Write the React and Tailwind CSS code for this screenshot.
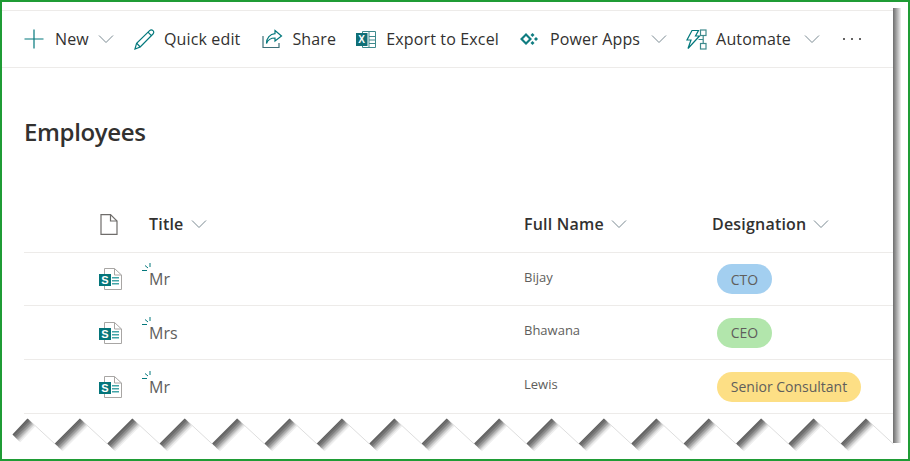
import { Fragment } from "react";

const Chevron = ({ className = "" }) => (
  <svg width="16" height="10" viewBox="0 0 16 10" fill="none" className={className}>
    <path d="M1 1.5 L8 8.5 L15 1.5" stroke="#7a8a92" strokeWidth="1" />
  </svg>
);

const PlusIcon = () => (
  <svg width="20" height="20" viewBox="0 0 20 20" fill="none">
    <path d="M10 0.5V19.5M0.5 10H19.5" stroke="#03787c" strokeWidth="1.2" />
  </svg>
);

const PencilIcon = () => (
  <svg width="21" height="21" viewBox="0 0 21 21" fill="none" stroke="#03787c" strokeWidth="1.2">
    <path d="M1 20L2.6 14.2L15.6 1.6C16.6 .7 18 .7 19 1.7C20 2.7 20 4 19 5L6.2 18Z" />
    <path d="M2.6 14.2L6.2 18M14 3.2L17.6 6.8" />
  </svg>
);

const ShareIcon = () => (
  <svg width="21" height="20" viewBox="0 0 21 20" fill="none" stroke="#03787c" strokeWidth="1.2">
    <path d="M1 7V18.5H17V14" stroke="#3d6f78" />
    <path d="M13 1.5L19.5 7L13 12V9C9 9 6 10.5 4.5 14.5C4.5 9 8 5 13 4.6Z" />
  </svg>
);

const ExcelIcon = () => (
  <svg width="20" height="17" viewBox="0 0 20 17">
    <path d="M6.5 .5H19.5V16.5H6.5Z" fill="#fff" stroke="#3e8a8d" />
    <path d="M13 1V16M13 5.5H19M13 9H19M13 12.5H19" stroke="#3e8a8d" />
    <rect x="0" y="2" width="11.5" height="13" fill="#0f6f76" />
    <text x="5.7" y="12.2" textAnchor="middle" fontSize="10" fontWeight="700" fill="#fff" fontFamily="'Liberation Sans', sans-serif">
      X
    </text>
  </svg>
);

const PowerAppsIcon = () => (
  <svg width="18" height="12" viewBox="0 0 18 12" fill="#0f7c80">
    <path d="M0 6L6 0L12 6L6 12ZM3 6L6 9L9 6L6 3Z" fillRule="evenodd" />
    <path d="M10.5 2L12.5 0L14.5 2L12.5 4ZM14 6L16 4L18 6L16 8ZM10.5 10L12.5 8L14.5 10L12.5 12Z" />
  </svg>
);

const AutomateIcon = () => (
  <svg width="21" height="21" viewBox="0 0 21 21" fill="none" stroke="#03787c" strokeWidth="1.2">
    <path d="M6 1.5H12.5L9.5 7H13.5L2 19.5L5 11H1Z" />
    <rect x="14.5" y="1" width="5.5" height="5.5" stroke="#3e8a8d" />
    <rect x="14.5" y="14.5" width="5.5" height="5.5" stroke="#3e8a8d" />
    <path d="M17.2 6.5V14.5M12.5 10.5H17.2" stroke="#3e8a8d" />
  </svg>
);

const PageIcon = () => (
  <svg width="18" height="21" viewBox="0 0 18 21" fill="none" stroke="#6f6d6b" strokeWidth="1.2">
    <path d="M1 .6H10.5L17 7V20.4H1Z" />
    <path d="M10.5 .6V7H17" />
  </svg>
);

const ListIcon = () => (
  <svg width="23" height="22" viewBox="0 0 23 22">
    <path d="M5.5 .5H15.5L22.5 7V21.5H5.5Z" fill="#fff" stroke="#a8a6a4" />
    <path d="M15.5 .5V7H22.5" fill="none" stroke="#a8a6a4" />
    <rect x="13" y="9" width="7" height="1.5" fill="#42a5a8" />
    <rect x="13" y="12" width="7" height="1.5" fill="#42a5a8" />
    <rect x="13" y="15" width="7" height="1.5" fill="#42a5a8" />
    <rect x="0" y="6" width="12" height="12" fill="#04757a" />
    <text x="6" y="15.6" textAnchor="middle" fontSize="11" fontWeight="700" fill="#fff" fontFamily="'Liberation Sans', sans-serif">
      S
    </text>
  </svg>
);

const NewMark = () => (
  <svg width="10" height="11" viewBox="0 0 10 11" fill="none" stroke="#03787c" strokeWidth="1" className="absolute -left-[8px] -top-[4px]">
    <path d="M9 0V4M4 2.5L7 5M1 7.5H6" />
  </svg>
);

const rows = [
  { title: "Mr", name: "Bijay", tag: "CTO", tagClass: "bg-[#a3cff0] w-[55px]", rowClass: "h-[53px]" },
  { title: "Mrs", name: "Bhawana", tag: "CEO", tagClass: "bg-[#b2e6ac] w-[55px]", rowClass: "h-[54px]" },
  { title: "Mr", name: "Lewis", tag: "Senior Consultant", tagClass: "bg-[#fddf85] w-[144px]", rowClass: "h-[54px]" },
];

const shades = ["#606060", "#666666", "#6e6e6e", "#7a7a7a", "#8a8a8a", "#9c9c9c", "#b0b0b0", "#c6c6c6", "#dadada", "#eeeeee"];
const teeth = [0, 1, 2, 3, 4, 5, 6, 7, 8, 9, 10, 11, 12, 13, 14, 15, 16];

// torn paper edge drawn over the bottom of the list
const TornEdge = () => (
  <svg width="906" height="50" viewBox="0 0 906 50" fill="none" className="absolute left-0 top-[412px]">
    {teeth.map((i) => {
      const px = 26 + i * 52.4;
      return (
        <Fragment key={i}>
          <path d={`M${px} 5L${px + 27} 30`} stroke="#dedede" strokeWidth="1" />
          {shades.map((color, s) => (
            <path
              key={color}
              d={`M${px - (i === 0 ? 15 : 25) + s * 0.75} ${(i === 0 ? 21 : 30) + s * 0.75}L${px + s * 0.75} ${5 + s * 0.75}`}
              stroke={color}
              strokeWidth="1.6"
            />
          ))}
        </Fragment>
      );
    })}
  </svg>
);

export default function App() {
  return (
    <div className="relative h-[461px] w-[910px] overflow-hidden border-2 border-[#1f9c35] bg-white font-['Open_Sans','Noto_Sans',sans-serif] text-[#323130]">
      <div className="flex h-[441px]">
        <div className="mt-[8px] w-[891px] border-t border-[#edebe9]">
          <div className="flex h-[57px] items-center border-b border-[#edebe9] pl-[22px] text-[16px] tracking-[0.15px]">
            <PlusIcon />
            <span className="ml-[11px]">New</span>
            <Chevron className="ml-[9px]" />
            <span className="ml-[20px]"><PencilIcon /></span>
            <span className="ml-[9px]">Quick edit</span>
            <span className="ml-[22px]"><ShareIcon /></span>
            <span className="ml-[9px]">Share</span>
            <span className="ml-[20px]"><ExcelIcon /></span>
            <span className="ml-[10px]">Export to Excel</span>
            <span className="ml-[21px]"><PowerAppsIcon /></span>
            <span className="ml-[12px]">Power Apps</span>
            <Chevron className="ml-[11px]" />
            <span className="ml-[19px]"><AutomateIcon /></span>
            <span className="ml-[9px]">Automate</span>
            <Chevron className="ml-[13px]" />
            <div className="ml-[23px] flex gap-[6px]">
              <span className="h-[2px] w-[2px] rounded-full bg-[#323130]" />
              <span className="h-[2px] w-[2px] rounded-full bg-[#323130]" />
              <span className="h-[2px] w-[2px] rounded-full bg-[#323130]" />
            </div>
          </div>

          <h1 className="mt-[46px] pl-[22px] text-[24px] leading-[36px] font-semibold tracking-[-0.35px]">Employees</h1>

          <div className="ml-[22px] mt-[48px]">
            <div className="flex h-[55px] items-center border-b border-[#edebe9] pb-[2px] text-[16px] font-semibold tracking-[0.2px]">
              <div className="flex w-[125px] justify-start pl-[76px]"><PageIcon /></div>
              <div className="flex w-[375px] items-center gap-[7px]">Title <Chevron /></div>
              <div className="flex w-[188px] items-center gap-[7px]">Full Name <Chevron /></div>
              <div className="flex items-center gap-[7px]">Designation <Chevron /></div>
            </div>
            {rows.map((row) => (
              <div key={row.name} className={`flex items-center border-b border-[#edebe9] text-[#605e5c] ${row.rowClass}`}>
                <div className="flex w-[125px] pl-[75px]"><ListIcon /></div>
                <div className="w-[375px] text-[16px]">
                  <span className="relative inline-block">
                    <NewMark />
                    {row.title}
                  </span>
                </div>
                <div className="w-[188px] pb-[3px] text-[13px]">{row.name}</div>
                <div className="pl-[5px]">
                  <span className={`flex h-[30px] items-center justify-center rounded-full text-[14px] ${row.tagClass}`}>{row.tag}</span>
                </div>
              </div>
            ))}
          </div>
        </div>
        <div className="mt-[6px] h-[435px] w-[8px] bg-gradient-to-r from-[#6e6e6e] to-[#f2f2f2]" />
      </div>
      <TornEdge />
    </div>
  );
}
